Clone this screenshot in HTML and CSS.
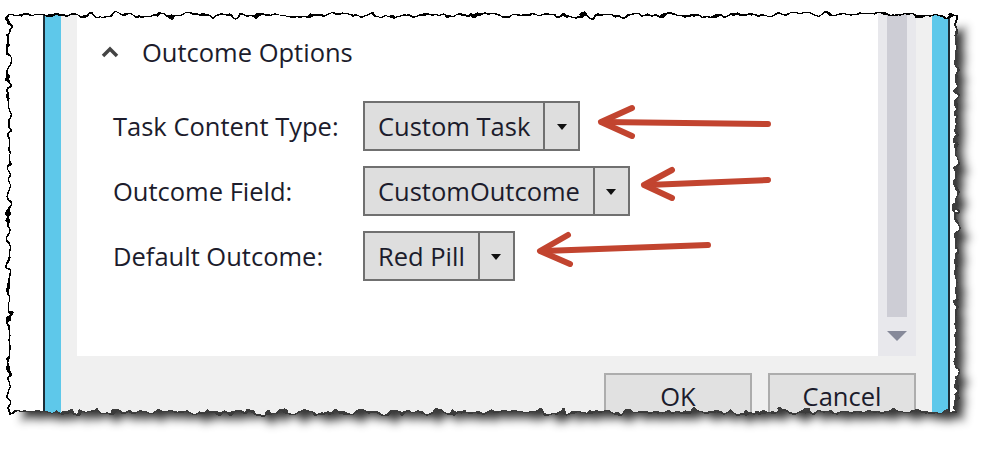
FILE: index.html
```html
<!DOCTYPE html>
<html lang="en">

<head>
    <meta charset="UTF-8">
    <title>Outcome Options</title>
    <link rel="stylesheet" href="styles.css">
</head>

<body>
    <div class="window">
        <div class="frame">
            <div class="content">
                <div class="panel">
                    <div class="section-head">
                        <svg class="chevron" width="20" height="12" viewBox="0 0 20 12">
                            <polyline points="3,10 10,3 17,10" fill="none" stroke="#444" stroke-width="3.5" />
                        </svg>
                        <span>Outcome Options</span>
                    </div>
                    <div class="fields">
                        <label>Task Content Type:</label>
                        <div class="combo">
                            <span class="combo-value">Custom Task</span>
                            <span class="combo-btn"><i class="tri"></i></span>
                        </div>

                        <label>Outcome Field:</label>
                        <div class="combo">
                            <span class="combo-value">CustomOutcome</span>
                            <span class="combo-btn"><i class="tri"></i></span>
                        </div>

                        <label>Default Outcome:</label>
                        <div class="combo">
                            <span class="combo-value">Red Pill</span>
                            <span class="combo-btn"><i class="tri"></i></span>
                        </div>
                    </div>
                </div>
                <div class="scrollbar">
                    <div class="thumb"></div>
                    <div class="down"><i class="tri-gray"></i></div>
                </div>
            </div>
            <div class="buttons">
                <button class="btn">OK</button>
                <button class="btn">Cancel</button>
            </div>
        </div>
    </div>

    <!-- red call-out arrows -->
    <svg class="arrows" width="1000" height="460" viewBox="0 0 1000 460">
        <g fill="none" stroke="#c2442f" stroke-width="6" stroke-linecap="round" stroke-linejoin="round">
            <line x1="768" y1="124" x2="604" y2="122" />
            <polyline points="632,108 601,122 632,136" />
            <line x1="768" y1="180" x2="648" y2="185" />
            <polyline points="672,170 644,185 672,198" />
            <line x1="708" y1="245" x2="544" y2="251" />
            <polyline points="568,235 540,251 570,264" />
        </g>
    </svg>

    <!-- torn paper edge with drop shadow -->
    <svg class="torn" width="1000" height="460" viewBox="0 0 1000 460">
        <defs>
            <filter id="tear" filterUnits="userSpaceOnUse" x="0" y="0" width="1000" height="460">
                <feTurbulence type="fractalNoise" baseFrequency="0.09" numOctaves="2" seed="7" result="noise" />
                <feDisplacementMap in="SourceGraphic" in2="noise" scale="12" xChannelSelector="R" yChannelSelector="G" result="edge" />
                <feColorMatrix in="edge" type="matrix" values="0 0 0 0 0  0 0 0 0 0  0 0 0 0 0  0 0 0 -1 1" result="paper" />
                <feOffset in="paper" dx="11" dy="10" result="moved" />
                <feGaussianBlur in="moved" stdDeviation="4" result="blur" />
                <feFlood flood-color="#3c3c3c" flood-opacity="1" />
                <feComposite in2="blur" operator="in" result="shade" />
                <feComposite in="shade" in2="edge" operator="in" result="shadow" />
                <feMerge>
                    <feMergeNode in="edge" />
                    <feMergeNode in="shadow" />
                </feMerge>
            </filter>
        </defs>
        <path filter="url(#tear)" fill="#fff" fill-rule="evenodd" stroke="#000" stroke-width="2"
            d="M-60,-60 H1060 V520 H-60 Z M9,15 H956 V412 H9 Z" />
    </svg>
</body>

</html>
```

FILE: styles.css
```css
* {
    margin: 0;
    padding: 0;
    box-sizing: border-box;
}

body {
    position: relative;
    width: 1000px;
    height: 460px;
    overflow: hidden;
    background-color: #fff;
    font-family: "Open Sans", "Noto Sans", sans-serif;
    font-size: 25.5px;
    color: #1c1c2c;
}

.window {
    margin-left: 43px;
    width: 907px;
    height: 460px;
    padding: 0 16px;
    background-color: #5ec8ea;
    border-left: 2px solid #1d2d36;
    border-right: 2px solid #1d2d36;
}

.frame {
    height: 100%;
    padding: 0 16px;
    background-color: #f0f0f0;
}

.content {
    display: flex;
    height: 356px;
}

.panel {
    flex: 1;
    background-color: #fff;
    padding: 36px 0 0 23px;
}

.section-head {
    display: flex;
    align-items: center;
    gap: 22px;
    height: 32px;
}

.fields {
    display: grid;
    grid-template-columns: 250px auto;
    grid-auto-rows: 50px;
    row-gap: 15px;
    align-items: center;
    margin: 33px 0 0 13px;
}

.combo {
    display: flex;
    justify-self: start;
    height: 50px;
    border: 2px solid #707070;
    background-color: #dedede;
}

.combo-value {
    display: flex;
    align-items: center;
    padding: 0 13px;
}

.combo-btn {
    display: flex;
    align-items: center;
    justify-content: center;
    width: 35px;
    border-left: 2px solid #707070;
}

.tri {
    width: 0;
    height: 0;
    border-left: 5px solid transparent;
    border-right: 5px solid transparent;
    border-top: 6px solid #111;
    margin-top: 2px;
}

/* scrollbar */
.scrollbar {
    width: 38px;
    padding: 0 9px;
    background-color: #e8e8ec;
}

.thumb {
    height: 317px;
    background-color: #cdcdd5;
}

.down {
    display: flex;
    justify-content: center;
    padding-top: 14px;
}

.tri-gray {
    width: 0;
    height: 0;
    border-left: 10px solid transparent;
    border-right: 10px solid transparent;
    border-top: 10px solid #868999;
}

.buttons {
    display: flex;
    justify-content: flex-end;
    gap: 16px;
    margin-top: 17px;
}

.btn {
    width: 148px;
    height: 46px;
    border: 2px solid #adadad;
    background-color: #e1e1e1;
    font: inherit;
    color: inherit;
}

.arrows,
.torn {
    position: absolute;
    top: 0;
    left: 0;
    pointer-events: none;
}
```
